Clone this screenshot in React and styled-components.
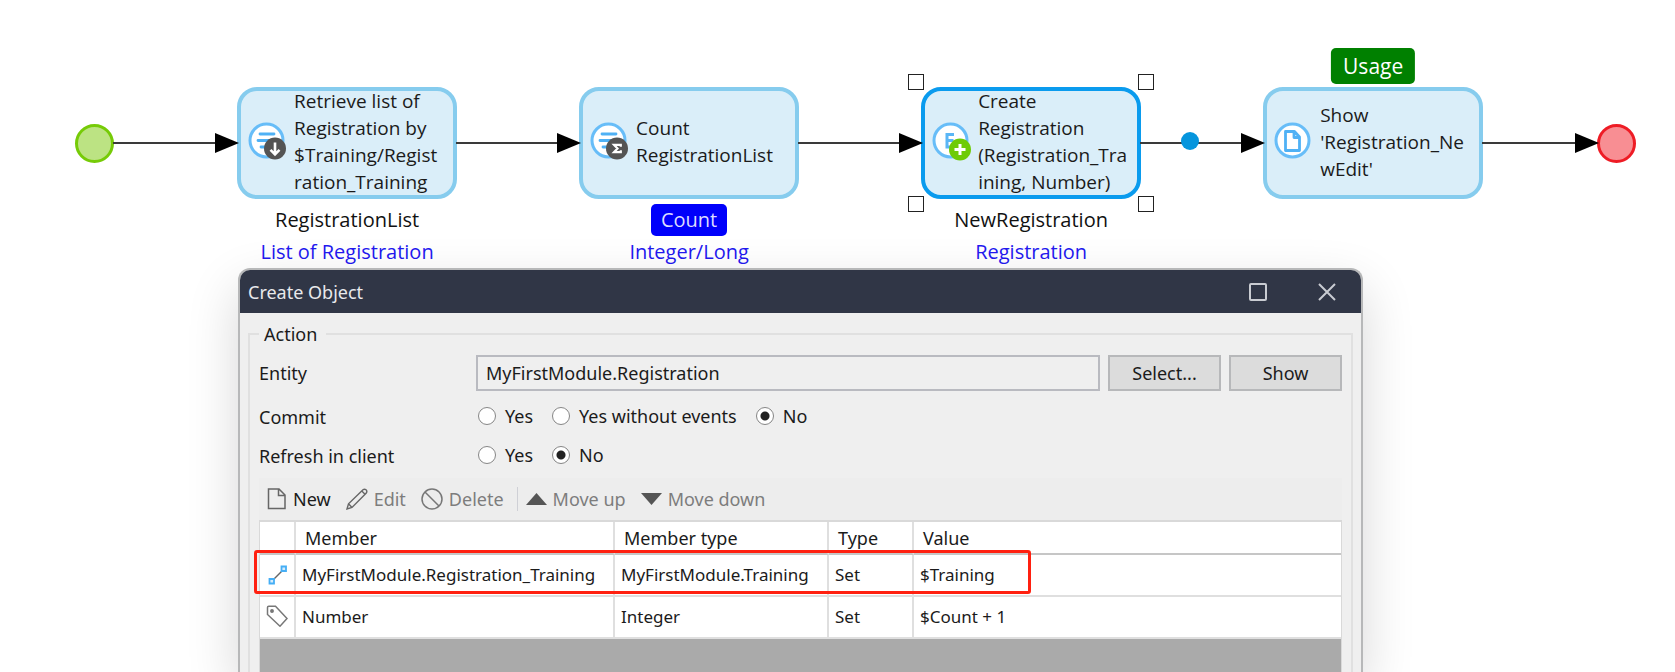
import React from "react";
import styled, { createGlobalStyle, css } from "styled-components";

const GlobalStyle = createGlobalStyle`
  *, *::before, *::after { box-sizing: border-box; }
  body { margin: 0; background: #fff; }
  body, button, input { font-family: "Noto Sans", "Open Sans", sans-serif; }
`;

const Page = styled.div`
  display: flex;
  flex-direction: column;
  height: 100vh;
  min-height: 640px;
  overflow: hidden;
  color: #1b1b1b;
  font-size: 18px;
`;

/* ---------- microflow diagram ---------- */

const Flow = styled.section`
  display: flex;
  align-items: flex-start;
  flex: none;
  padding: 87px 39px 0 75px;
  font-family: "Open Sans", sans-serif;
  font-size: 19px;
  line-height: 27px;
`;

const Lane = styled.div`
  display: flex;
  align-items: center;
  height: 112px;
`;

const EventDot = styled.div`
  width: 39px;
  height: 39px;
  border-radius: 50%;
  border: 3px solid ${(p) => (p.$kind === "start" ? "#76cb07" : "#ee1c25")};
  background: ${(p) => (p.$kind === "start" ? "#bce383" : "#f88e93")};
`;

const ArrowLane = styled(Lane)`
  position: relative;
  flex: ${(p) => p.$span} 1 0;
  min-width: 0;
  margin-right: -2px;
  margin-left: -1px;
  z-index: 1;
`;

const Line = styled.div`
  flex: 1;
  height: 2px;
  background: #3a3a3a;
`;

const FlowPoint = styled.span`
  position: absolute;
  left: 40%;
  top: 50%;
  width: 18px;
  height: 18px;
  margin: -11px 0 0 -9px;
  border-radius: 50%;
  background: #0595dd;
`;

function Arrow({ span, point }) {
  return (
    <ArrowLane $span={span}>
      <Line />
      <svg width="24" height="20" viewBox="0 0 24 20" aria-hidden="true">
        <path d="M0 0 L24 10 L0 20 Z" fill="#000" />
      </svg>
      {point && <FlowPoint />}
    </ArrowLane>
  );
}

const Activity = styled.div`
  flex: none;
  width: 220px;
`;

const ActivityBox = styled(Lane)`
  position: relative;
  gap: 6px;
  padding: 0 0 2px 7px;
  border: 4px solid ${(p) => (p.$selected ? "#0a9bee" : "#86ccee")};
  border-radius: 20px;
  background: #daeef9;
  white-space: nowrap;
`;

const Handle = styled.span`
  position: absolute;
  width: 16px;
  height: 16px;
  border: 1px solid #222;
  background: #fff;
  ${(p) => p.$v}: -17px;
  ${(p) => p.$h}: -17px;
`;

const Captions = styled.div`
  display: flex;
  flex-direction: column;
  align-items: center;
  height: 69px;
  padding-top: 5px;
  font-size: 20px;
  line-height: 32px;
  color: #111;
`;

const TypeName = styled.span`
  color: #2318f0;
`;

const tag = css`
  border-radius: 5px;
  color: #fff;
`;

const CountTag = styled.span`
  ${tag}
  padding: 0 10px;
  background: #0000fb;
  color: #dcdcff;
`;

const UsageTag = styled.span`
  ${tag}
  position: absolute;
  bottom: 111px;
  left: 50%;
  transform: translateX(-50%);
  padding: 0 12px;
  line-height: 36px;
  font-size: 21px;
  background: #008000;
`;

const ring = { fill: "#fff", stroke: "#67bdf8", strokeWidth: 3 };

function ActivityIcon({ kind }) {
  return (
    <svg width="40" height="40" viewBox="0 0 40 40" fill="none" aria-hidden="true">
      <circle cx="18.5" cy="18.5" r="16.5" {...ring} />
      {(kind === "retrieve" || kind === "count") && (
        <>
          <path d="M12 12H26M10 18.500H26M13 25H22" stroke="#4fb1f5" strokeWidth="2.800" strokeLinecap="round" />
          <circle cx="27" cy="26.500" r="11" fill="#545454" />
        </>
      )}
      {kind === "retrieve" && (
        <path d="M27 20.500V32M22.500 27.800L27 32.300L31.500 27.800" stroke="#fff" strokeWidth="2.600" />
      )}
      {kind === "count" && (
        <path d="M30.800 24.800V22.800H24L27.500 26.500L24 30.200H30.800V28.200" stroke="#fff" strokeWidth="2.200" />
      )}
      {kind === "create" && (
        <>
          <path d="M22 12.500H15V25H22M15 18.500H21.500" stroke="#5ab6f6" strokeWidth="3" />
          <circle cx="28" cy="27.500" r="11" fill="#6ecb06" />
          <path d="M28 22V33M22.500 27.500H33.500" stroke="#fff" strokeWidth="3" />
        </>
      )}
      {kind === "page" && (
        <path d="M11.500 9.500H20.500L25.500 15V28.500H11.500ZM20 9.500V15.500H25.500" stroke="#4fb1f5" strokeWidth="2.800" strokeLinejoin="round" />
      )}
    </svg>
  );
}

function ActivityNode({ kind, lines, selected, usage, children }) {
  return (
    <Activity>
      <ActivityBox $selected={selected}>
        <ActivityIcon kind={kind} />
        <div>
          {lines.map((line) => (
            <div key={line}>{line}</div>
          ))}
        </div>
        {usage && <UsageTag>{usage}</UsageTag>}
        {selected &&
          ["top", "bottom"].map((v) => ["left", "right"].map((h) => <Handle key={v + h} $v={v} $h={h} />))}
      </ActivityBox>
      <Captions>{children}</Captions>
    </Activity>
  );
}

/* ---------- dialog ---------- */

const Dialog = styled.section`
  position: relative;
  display: flex;
  flex: 1;
  flex-direction: column;
  min-height: 0;
  margin: 0 312px 0 238px;
  border: 2px solid #b7b8b9;
  border-bottom: 0;
  border-radius: 12px 12px 0 0;
  background: #efefef;
  box-shadow: 0 20px 52px rgba(0, 0, 0, 0.16);
`;

const TitleBar = styled.header`
  display: flex;
  align-items: center;
  flex: none;
  height: 43px;
  padding: 0 0 0 8px;
  border-radius: 10px 10px 0 0;
  background: #303646;
  color: #e8e9ec;
`;

const Title = styled.h1`
  flex: 1;
  margin: 0;
  font-size: 18px;
  font-weight: 400;
`;

const WindowButton = styled.button`
  display: grid;
  place-items: center;
  width: 69px;
  height: 43px;
  padding: 0;
  border: 0;
  background: none;
  color: #c9ccd2;
`;

const Group = styled.fieldset`
  display: flex;
  flex: 1;
  flex-direction: column;
  min-width: 0;
  min-height: 0;
  margin: 10px 8px 0;
  padding: 10px 9px 0;
  border: 2px solid #e0e0e0;
  border-bottom: 0;
`;

const Legend = styled.legend`
  padding: 0 9px 0 5px;
  line-height: 22px;
`;

const FormRow = styled.div`
  display: grid;
  grid-template-columns: 217px minmax(0, 1fr);
  align-items: center;
  flex: none;
  height: 39px;
`;

const EntityRow = styled(FormRow)`
  height: 36px;
  margin-bottom: 6px;
`;

const Controls = styled.div`
  display: flex;
  align-items: center;
  gap: 8px;
`;

const Choices = styled(Controls)`
  gap: 19px;
  padding: 0 0 2px 2px;
`;

const EntityInput = styled.input`
  flex: 1;
  min-width: 0;
  height: 36px;
  padding: 0 8px;
  border: 2px solid #b9bac0;
  background: #efefef;
  color: #1b1b1b;
  font-size: 18px;
`;

const PushButton = styled.button`
  width: 113px;
  height: 36px;
  padding: 0;
  border: 2px solid #b7b8ba;
  background: #dcdcdc;
  color: #1b1b1b;
  font-size: 18px;
`;

const Choice = styled.label`
  display: flex;
  align-items: center;
  gap: 9px;
`;

const Radio = styled.input`
  appearance: none;
  width: 18px;
  height: 18px;
  margin: 0;
  border: 1px solid #868686;
  border-radius: 50%;
  background: #fff;
  &:checked {
    background: radial-gradient(circle, #222 4px, #fff 5px);
  }
`;

const ToolBar = styled.div`
  display: flex;
  align-items: center;
  flex: none;
  height: 42px;
  margin-top: 3px;
  padding-left: 8px;
  background: #ededed;
`;

const Tool = styled.button`
  display: flex;
  align-items: center;
  gap: 6px;
  margin-right: 15px;
  padding: 0;
  border: 0;
  background: none;
  color: ${(p) => (p.disabled ? "#7d7d7d" : "#1b1b1b")};
  font-size: 18px;
`;

const Separator = styled.span`
  width: 1px;
  height: 24px;
  margin: 0 8px 0 -2px;
  background: #cfd0d6;
`;

const GridArea = styled.div`
  position: relative;
  flex: 1;
  min-height: 0;
  background: #aaa;
  border: solid #d9d9d9;
  border-width: 2px 1px 0;
`;

const Grid = styled.table`
  width: 100%;
  border-collapse: separate;
  border-spacing: 0;
  table-layout: fixed;
  background: #fff;
`;

const HeadCell = styled.th`
  width: ${(p) => (p.$w ? `${p.$w}px` : "auto")};
  height: 33px;
  padding: 0 9px;
  border-right: 2px solid #dfdfdf;
  border-bottom: 2px solid #c6c6c6;
  text-align: left;
  font-size: 18px;
  font-weight: 400;
  &:last-child { border-right: 0; }
`;

const Cell = styled.td`
  height: 42px;
  padding: 0 6px 2px;
  border-right: 2px solid #dfdfdf;
  border-bottom: 2px solid #dfdfdf;
  font-size: 17px;
  white-space: nowrap;
  &:last-child { border-right: 0; }
`;

const GridIcon = styled.svg`
  display: block;
`;

const Highlight = styled.div`
  position: absolute;
  top: 28px;
  left: -6px;
  width: 777px;
  height: 44px;
  border: 3px solid #ff2010;
  border-radius: 3px;
  pointer-events: none;
`;

const toolIcons = {
  new: (
    <svg width="20" height="22" viewBox="0 0 20 22" fill="none" stroke="#666" strokeWidth="1.500">
      <path d="M1.500 1H12L18 7V20.500H1.500ZM11.500 1V7.500H18" />
    </svg>
  ),
  edit: (
    <svg width="22" height="22" viewBox="0 0 22 22" fill="none" stroke="#666" strokeWidth="1.400">
      <path d="M1 21L2.500 15.800L17 1.800Q18.500 .500 20 1.800T20.300 5L6 19.500ZM2.500 15.800L6 19.500M15.800 3L19 6.200" />
    </svg>
  ),
  delete: (
    <svg width="22" height="22" viewBox="0 0 22 22" fill="none" stroke="#777" strokeWidth="1.500">
      <circle cx="11" cy="11" r="10" />
      <path d="M4 4L18 18" />
    </svg>
  ),
  up: (
    <svg width="21" height="12" viewBox="0 0 21 12">
      <path d="M0 12L10.500 0L21 12Z" fill="#555" />
    </svg>
  ),
  down: (
    <svg width="21" height="12" viewBox="0 0 21 12">
      <path d="M0 0L10.500 12L21 0Z" fill="#555" />
    </svg>
  ),
};

function AssociationIcon() {
  return (
    <GridIcon width="22" height="22" viewBox="0 0 22 22" fill="none">
      <path d="M6 18L18 6" stroke="#666" strokeWidth="1.500" />
      <path d="M15.500 3.500H20V8H15.500ZM3.500 16H8V20.500H3.500Z" fill="#d5ecfc" stroke="#45aef5" strokeWidth="1.800" />
    </GridIcon>
  );
}

function AttributeIcon() {
  return (
    <GridIcon width="22" height="22" viewBox="0 0 22 22" fill="none" stroke="#777" strokeWidth="1.500">
      <path d="M1.500 2.500Q1.500 1.200 2.800 1.200H9.500L21 13.500L14 21.200L1.500 9.500Z" />
      <circle cx="6" cy="6" r="1.200" fill="#777" />
    </GridIcon>
  );
}

const rows = [
  { icon: <AssociationIcon />, cells: ["MyFirstModule.Registration_Training", "MyFirstModule.Training", "Set", "$Training"] },
  { icon: <AttributeIcon />, cells: ["Number", "Integer", "Set", "$Count + 1"] },
];

function RadioRow({ label, name, options, selected }) {
  return (
    <FormRow role="radiogroup" aria-label={label}>
      <span>{label}</span>
      <Choices>
        {options.map((option) => (
          <Choice key={option}>
            <Radio type="radio" name={name} defaultChecked={option === selected} />
            {option}
          </Choice>
        ))}
      </Choices>
    </FormRow>
  );
}

export default function App() {
  return (
    <Page>
      <GlobalStyle />
      <Flow>
        <Lane>
          <EventDot $kind="start" />
        </Lane>
        <Arrow span={123} />
        <ActivityNode kind="retrieve" lines={["Retrieve list of", "Registration by", "$Training/Regist", "ration_Training"]}>
          <span>RegistrationList</span>
          <TypeName>List of Registration</TypeName>
        </ActivityNode>
        <Arrow span={122} />
        <ActivityNode kind="count" lines={["Count", "RegistrationList"]}>
          <CountTag>Count</CountTag>
          <TypeName>Integer/Long</TypeName>
        </ActivityNode>
        <Arrow span={122} />
        <ActivityNode kind="create" selected lines={["Create", "Registration", "(Registration_Tra", "ining, Number)"]}>
          <span>NewRegistration</span>
          <TypeName>Registration</TypeName>
        </ActivityNode>
        <Arrow span={122} point />
        <ActivityNode kind="page" usage="Usage" lines={["Show", "'Registration_Ne", "wEdit'"]} />
        <Arrow span={114} />
        <Lane>
          <EventDot $kind="end" />
        </Lane>
      </Flow>

      <Dialog role="dialog" aria-labelledby="dialog-title">
        <TitleBar>
          <Title id="dialog-title">Create Object</Title>
          <WindowButton aria-label="Maximize">
            <svg width="18" height="18" viewBox="0 0 18 18" fill="none" stroke="currentColor" strokeWidth="2">
              <rect x="1" y="1" width="16" height="16" rx="1" />
            </svg>
          </WindowButton>
          <WindowButton aria-label="Close">
            <svg width="18" height="18" viewBox="0 0 18 18" stroke="currentColor" strokeWidth="2">
              <path d="M1 1L17 17M17 1L1 17" />
            </svg>
          </WindowButton>
        </TitleBar>
        <Group>
          <Legend>Action</Legend>
          <EntityRow>
            <label htmlFor="entity">Entity</label>
            <Controls>
              <EntityInput id="entity" readOnly defaultValue="MyFirstModule.Registration" />
              <PushButton>Select...</PushButton>
              <PushButton>Show</PushButton>
            </Controls>
          </EntityRow>
          <RadioRow label="Commit" name="commit" options={["Yes", "Yes without events", "No"]} selected="No" />
          <RadioRow label="Refresh in client" name="refresh" options={["Yes", "No"]} selected="No" />
          <ToolBar>
            <Tool>{toolIcons.new}New</Tool>
            <Tool disabled>{toolIcons.edit}Edit</Tool>
            <Tool disabled>{toolIcons.delete}Delete</Tool>
            <Separator />
            <Tool disabled>{toolIcons.up}Move up</Tool>
            <Tool disabled>{toolIcons.down}Move down</Tool>
          </ToolBar>
          <GridArea>
            <Grid>
              <thead>
                <tr>
                  <HeadCell $w={36} aria-label="Kind" />
                  <HeadCell $w={319}>Member</HeadCell>
                  <HeadCell $w={214}>Member type</HeadCell>
                  <HeadCell $w={85}>Type</HeadCell>
                  <HeadCell>Value</HeadCell>
                </tr>
              </thead>
              <tbody>
                {rows.map((row) => (
                  <tr key={row.cells[0]}>
                    <Cell>{row.icon}</Cell>
                    {row.cells.map((text, i) => (
                      <Cell key={i}>{text}</Cell>
                    ))}
                  </tr>
                ))}
              </tbody>
            </Grid>
            <Highlight />
          </GridArea>
        </Group>
      </Dialog>
    </Page>
  );
}
